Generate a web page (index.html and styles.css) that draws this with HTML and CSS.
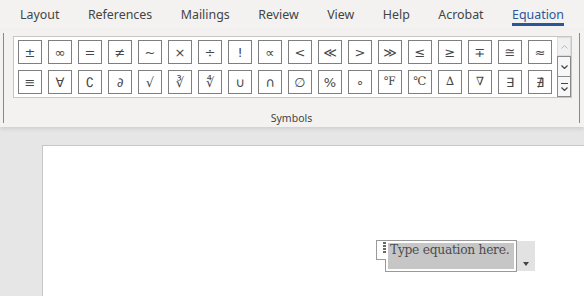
FILE: index.html
```html
<!DOCTYPE html>
<html>
<head>
<meta charset="utf-8">
<link rel="stylesheet" href="styles.css">
</head>
<body>
<div class="tabs">
  <span class="tab">Layout</span>
  <span class="tab">References</span>
  <span class="tab">Mailings</span>
  <span class="tab">Review</span>
  <span class="tab">View</span>
  <span class="tab">Help</span>
  <span class="tab">Acrobat</span>
  <span class="tab active">Equation</span>
</div>
<div class="ribbon">
  <div class="group">
    <div class="gallery">
      <div class="grid">
        <span class="sym">±</span><span class="sym">∞</span><span class="sym">=</span><span class="sym">≠</span><span class="sym">~</span><span class="sym">×</span><span class="sym">÷</span><span class="sym">!</span><span class="sym">∝</span><span class="sym">&lt;</span><span class="sym">≪</span><span class="sym">&gt;</span><span class="sym">≫</span><span class="sym">≤</span><span class="sym">≥</span><span class="sym">∓</span><span class="sym">≅</span><span class="sym">≈</span>
        <span class="sym">≡</span><span class="sym">∀</span><span class="sym">∁</span><span class="sym">∂</span><span class="sym">√</span><span class="sym">∛</span><span class="sym">∜</span><span class="sym">∪</span><span class="sym">∩</span><span class="sym">∅</span><span class="sym">%</span><span class="sym">∘</span><span class="sym serif">℉</span><span class="sym serif">℃</span><span class="sym serif">∆</span><span class="sym serif">∇</span><span class="sym">∃</span><span class="sym">∄</span>
      </div>
      <div class="scroll">
        <div class="sbtn up"><svg width="7" height="4" viewBox="0 0 7 4"><path d="M0.5 3.5 L3.5 0.5 L6.5 3.5" fill="none" stroke="#b8b8b8" stroke-width="1"/></svg></div>
        <div class="sbtn down"><svg width="7" height="4" viewBox="0 0 7 4"><path d="M0.5 0.5 L3.5 3.5 L6.5 0.5" fill="none" stroke="#444" stroke-width="1.2"/></svg></div>
        <div class="sbtn more"><svg width="7" height="8" viewBox="0 0 7 8"><path d="M0 0.5 H7" stroke="#444" stroke-width="1"/><path d="M0.5 4.5 L3.5 7.5 L6.5 4.5" fill="none" stroke="#444" stroke-width="1.2"/></svg></div>
      </div>
    </div>
    <div class="group-label">Symbols</div>
  </div>
</div>
<div class="doc">
  <div class="page">
    <div class="eq">
      <div class="eq-tab"><span class="eq-grip"></span></div>
      <div class="eq-field"><span class="eq-text">Type equation here.</span></div>
      <div class="eq-drop"><span class="tri"></span></div>
    </div>
  </div>
</div>
</body>
</html>
```
FILE: styles.css
```css
html, body {
  margin: 0;
  padding: 0;
  width: 584px;
  height: 296px;
  overflow: hidden;
  background: #e6e6e6;
  font-family: "Noto Sans", "Open Sans", sans-serif;
}
.tabs {
  height: 30px;
  background: #f3f2f1;
  display: flex;
  align-items: flex-start;
  gap: 28.5px;
  padding-left: 20px;
  box-sizing: border-box;
}
.tab {
  font-size: 12.4px;
  color: #444;
  line-height: 17px;
  padding-top: 6px;
  height: 21px;
  border-bottom: 3px solid transparent;
  box-sizing: content-box;
  white-space: nowrap;
}
.tab.active {
  color: #2b579a;
  border-bottom-color: #2b579a;
  height: 17px;
  padding-bottom: 0;
}
.ribbon {
  background: #f3f2f1;
  padding: 3px 0 4px 3px;
  position: relative;
  box-shadow: 0 2px 4px rgba(0,0,0,0.10);
  z-index: 2;
}
.group {
  width: 577px;
  height: 90px;
  border-left: 1px solid #8a8886;
  border-right: 1px solid #8a8886;
  padding: 3px 0 0 9px;
  box-sizing: border-box;
  display: flex;
  flex-direction: column;
}
.gallery {
  width: 559px;
  height: 62px;
  border: 1px solid #c8c6c4;
  background: #fff;
  box-sizing: border-box;
  display: flex;
}
.grid {
  display: grid;
  grid-template-columns: repeat(18, 24px);
  grid-auto-rows: 24px;
  gap: 6px;
  padding: 3px 0 0 4px;
}
.sym {
  border: 1px solid #7f7f7f;
  box-sizing: border-box;
  display: flex;
  align-items: center;
  justify-content: center;
  font-family: "DejaVu Sans", sans-serif;
  font-size: 13px;
  color: #474747;
  line-height: 1;
}
.sym.serif {
  font-family: "DejaVu Serif", serif;
  font-size: 11.5px;
}
.scroll {
  margin-left: auto;
  width: 14px;
  display: flex;
  flex-direction: column;
}
.sbtn {
  box-sizing: border-box;
  display: flex;
  align-items: center;
  justify-content: center;
}
.sbtn svg { display: block; }
.sbtn.up {
  height: 19px;
  background: #f0f0f0;
  border: 1px solid #dcdcdc;
}
.sbtn.down {
  height: 21px;
  background: #f7f7f7;
  border: 1px solid #8a8a8a;
}
.sbtn.more {
  height: 20px;
  background: #f7f7f7;
  border: 1px solid #8a8a8a;
  border-top: none;
}
.group-label {
  margin-top: 13px;
  font-size: 10.5px;
  line-height: 14px;
  color: #444;
  text-align: center;
  padding-right: 9px;
}
.doc {
  padding: 18px 0 0 42px;
}
.page {
  width: 600px;
  height: 200px;
  background: #fff;
  border-left: 1px solid #c6c6c6;
  border-top: 1px solid #c6c6c6;
  padding: 94px 0 0 333px;
  box-sizing: border-box;
}
.eq {
  display: flex;
  align-items: flex-start;
}
.eq-tab {
  width: 10px;
  height: 20px;
  box-sizing: border-box;
  border: 1px solid #9a9a9a;
  border-right: none;
  background: #fff;
  position: relative;
  z-index: 1;
  margin-right: -1px;
  display: flex;
  justify-content: flex-end;
  padding-top: 1px;
}
.eq-grip {
  width: 3px;
  height: 12px;
  background: repeating-linear-gradient(to bottom, #6a6a6a 0 2px, transparent 2px 3px);
}
.eq-field {
  width: 132px;
  height: 32px;
  border: 1px solid #9a9a9a;
  box-sizing: border-box;
  padding: 2px 2px 2px 2px;
  display: flex;
}
.eq-text {
  flex: 1;
  background: #c6c6c6;
  font-family: "DejaVu Serif", serif;
  font-size: 12.3px;
  letter-spacing: -0.3px;
  color: #4d4d4d;
  padding-left: 2px;
  line-height: 15px;
  white-space: nowrap;
  overflow: hidden;
}
.eq-drop {
  width: 18px;
  height: 30px;
  margin-top: 1px;
  background: #e2e2e2;
  display: flex;
  align-items: flex-end;
  justify-content: center;
  padding-bottom: 5px;
  box-sizing: border-box;
}
.tri {
  width: 0;
  height: 0;
  border-left: 3.5px solid transparent;
  border-right: 3.5px solid transparent;
  border-top: 4px solid #444;
}
```
